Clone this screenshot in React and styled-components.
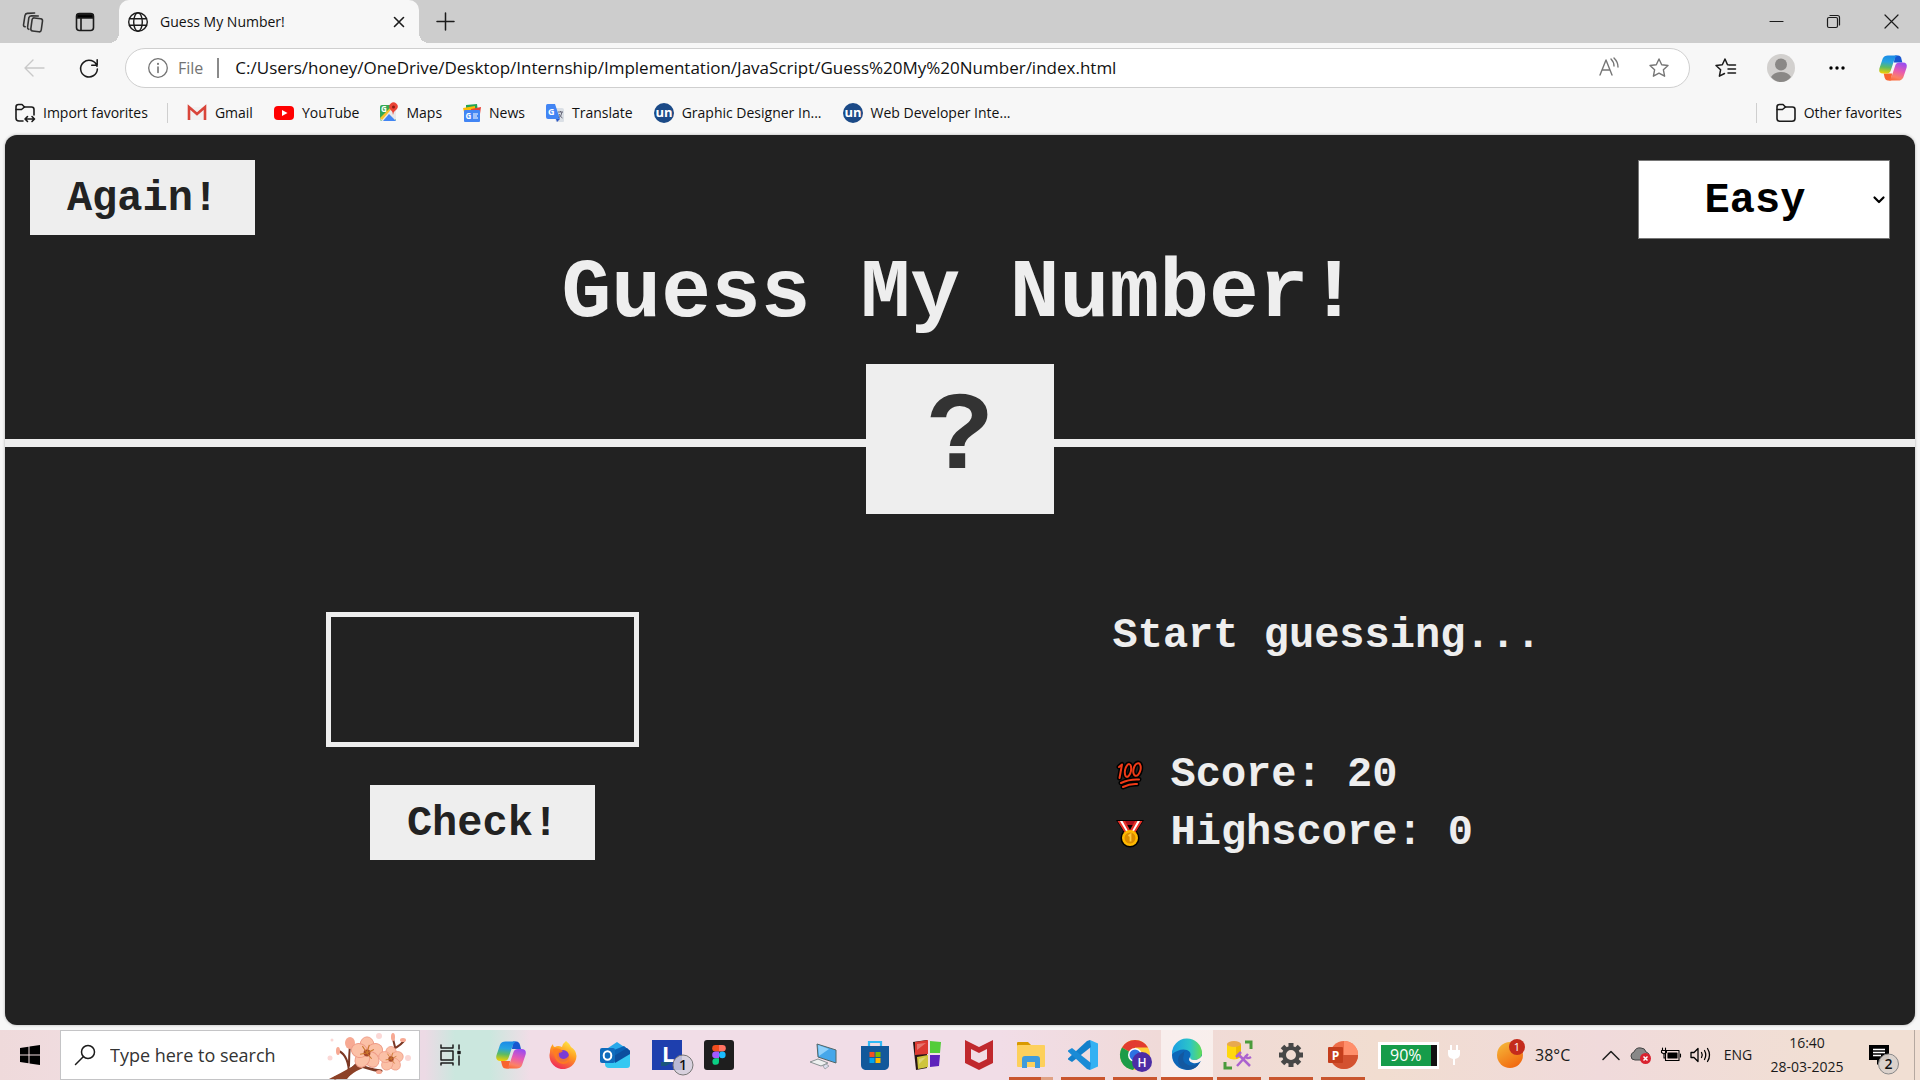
import React, { useState } from "react";
import styled, { createGlobalStyle } from "styled-components";

const Global = createGlobalStyle`
  * { box-sizing: border-box; }
  body { margin: 0; background: #f7f7f7; font-family: "Open Sans", "Noto Sans", sans-serif; color: #111; }
  button, input, select { font: inherit; color: inherit; margin: 0; padding: 0; border: 0; background: none; border-radius: 0; outline: none; }
  button, select { cursor: pointer; }
  a { color: inherit; text-decoration: none; }
  svg { display: block; flex: none; overflow: visible; }
`;

const ui = `"Open Sans", "Noto Sans", sans-serif`;
const mono = `"Liberation Mono", monospace`;

const Window = styled.div`
  display: flex;
  flex-direction: column;
  min-height: 100vh;
`;

/* ---------- browser chrome ---------- */
const TabStrip = styled.header`
  display: flex;
  height: 43px;
  background: #cdcdcd;
`;
const StripTools = styled.div`
  display: flex;
  align-items: center;
  width: 119px;
  gap: 32px;
  padding-left: 22px;
`;
const IconButton = styled.button`
  display: grid;
  place-items: center;
  width: ${(p) => p.$w || 20}px;
  height: ${(p) => p.$h || 20}px;
  flex: none;
`;
const Tab = styled.div`
  display: flex;
  align-items: center;
  gap: 12px;
  width: 300px;
  padding: 0 10px 0 9px;
  background: #f7f7f7;
  border-radius: 10px 10px 0 0;
  font: 14px/20px ${ui};
  position: relative;
  &::before, &::after {
    content: "";
    position: absolute;
    bottom: 0;
    width: 10px;
    height: 10px;
  }
  &::before { right: 100%; background: radial-gradient(circle at 0 0, transparent 10px, #f7f7f7 10px); }
  &::after { left: 100%; background: radial-gradient(circle at 100% 0, transparent 10px, #f7f7f7 10px); }
`;
const TabTitle = styled.span`
  flex: 1;
  white-space: nowrap;
`;
const NewTab = styled(IconButton)`
  align-self: center;
  margin-left: 16px;
`;
const WindowControls = styled.div`
  display: flex;
  align-items: center;
  margin-left: auto;
`;

const Toolbar = styled.div`
  display: flex;
  align-items: center;
  height: 50px;
  padding: 0 13px 0 20px;
`;
const NavButtons = styled.div`
  display: flex;
  gap: 34px;
  width: 105px;
  padding-left: 4px;
`;
const AddressBar = styled.form`
  display: flex;
  align-items: center;
  flex: 1;
  height: 40px;
  padding: 0 20px 0 22px;
  border: 1px solid #cfcfcf;
  border-radius: 20px;
  background: #fff;
  font: 16px/22px ${ui};
`;
const Scheme = styled.label`
  display: flex;
  align-items: center;
  gap: 10px;
  padding-right: 14px;
  border-right: 2px solid #8a8a8a;
  line-height: 20px;
  color: #737373;
`;
const Url = styled.input`
  flex: 1;
  min-width: 0;
  padding-left: 16px;
  font-size: 17px;
`;
const AddressTools = styled.div`
  display: flex;
  gap: 30px;
`;
const ToolbarEnd = styled.div`
  display: flex;
  align-items: center;
  gap: 28px;
  padding-left: 21px;
`;

const Favorites = styled.nav`
  display: flex;
  align-items: center;
  gap: 21px;
  height: 42px;
  padding: 0 18px 2px 15px;
  font: 14px/20px ${ui};
  white-space: nowrap;
`;
const Favorite = styled.a`
  display: flex;
  align-items: center;
  gap: 8px;
`;
const Divider = styled.span`
  width: 1px;
  height: 20px;
  margin: 0 -2px;
  background: #cfcfcf;
`;
const Spacer = styled.span`
  flex: 1;
`;

/* ---------- game page ---------- */
const Page = styled.div`
  flex: 1;
  display: flex;
  flex-direction: column;
  margin: 0 5px 5px;
  border-radius: 12px;
  background: #222;
  color: #eee;
  font: bold 42px/58px ${mono};
  box-shadow: 0 0 3px #aaa;
`;
const GameHeader = styled.div`
  position: relative;
  height: 35%;
  min-height: 312px;
  padding: 25px;
  border-bottom: 8px solid #eee;
`;
const GameTools = styled.div`
  display: flex;
  justify-content: space-between;
  align-items: flex-start;
  height: 79px;
`;
const GameButton = styled.button`
  height: 75px;
  padding: 2px 36px 0;
  min-width: 225px;
  background: #eee;
  color: #222;
`;
const LevelBox = styled.div`
  display: grid;
  align-items: center;
  svg { grid-area: 1 / 1; justify-self: end; margin-right: 5px; pointer-events: none; }
`;
const Level = styled.select`
  grid-area: 1 / 1;
  appearance: none;
  width: 252px;
  height: 79px;
  padding: 2px 18px 0 0;
  border: 1px solid #767676;
  background: #fff;
  color: #000;
  text-align: center;
  text-align-last: center;
`;
const Title = styled.h1`
  margin: 0;
  font: bold 83px/110px ${mono};
  text-align: center;
`;
const Secret = styled.div`
  position: absolute;
  left: 50%;
  bottom: -75px;
  width: 188px;
  height: 150px;
  margin-left: -94px;
  background: #eee;
  color: #333;
  font: bold 112px/150px ${mono};
  text-align: center;
`;
const Main = styled.main`
  flex: 1;
  display: flex;
  align-items: center;
  justify-content: space-around;
`;
const GuessForm = styled.form`
  display: flex;
  flex-direction: column;
  align-items: center;
  gap: 38px;
  width: 650px;
`;
const Guess = styled.input`
  width: 313px;
  height: 135px;
  border: 5px solid #eee;
  text-align: center;
`;
const Status = styled.section`
  width: 650px;
  padding-top: 8px;
`;
const Message = styled.p`
  margin: 0 0 92px;
  line-height: 36px;
`;
const Score = styled.p`
  display: flex;
  align-items: center;
  gap: 27px;
  margin: 0;
  padding-left: 3px;
`;

/* ---------- taskbar ---------- */
const Taskbar = styled.footer`
  display: flex;
  height: 50px;
  color: #1a1a1a;
  background: linear-gradient(90deg, #efdadb 0, #f1dde2 120px, #ecdae5 425px, #cbe7de 455px, #cbe7de 490px, #f1dde7 530px, #f1dde7 1000px, #f0dad8 1160px, #f1ddd0 1380px, #f0dadb 1600px, #f1dfd3 1830px, #f1dfd3 100%);
`;
const StartButton = styled(IconButton)`
  width: 60px;
  height: 50px;
`;
const SearchBox = styled.label`
  display: flex;
  align-items: center;
  gap: 15px;
  width: 360px;
  padding: 0 6px 0 14px;
  border: 1px solid #c4c4c6;
  background: #fff;
`;
const SearchInput = styled.input`
  flex: 1;
  min-width: 0;
  font: 18px/26px ${ui};
  &::placeholder { color: #333; opacity: 1; }
`;
const Dock = styled.div`
  display: flex;
  margin-left: 5px;
`;
const DockButton = styled.button`
  display: grid;
  place-items: center;
  width: 52px;
  height: 50px;
  background: ${(p) => (p.$active ? "rgba(255,255,255,.55)" : "none")};
  border-bottom: 3px solid transparent;
  border-image: ${(p) =>
    p.$active
      ? "linear-gradient(#c9562e, #c9562e) 1"
      : p.$stacked
      ? "linear-gradient(90deg, transparent 5px, #c9562e 5px, #c9562e 36px, #e0a184 36px, #e0a184 47px, transparent 47px) 1"
      : p.$open
      ? "linear-gradient(90deg, transparent 5px, #c9562e 5px, #c9562e 47px, transparent 47px) 1"
      : "none"};
  padding-top: 3px;
`;
const Tray = styled.div`
  display: flex;
  align-items: center;
  margin-left: auto;
  font: 15px/20px ${ui};
`;
const Battery = styled.div`
  display: flex;
  align-items: center;
  gap: 9px;
  margin-right: 37px;
`;
const Charge = styled.span`
  width: 61px;
  height: 27px;
  border: 3px solid #fff;
  border-right-width: 2px;
  background: linear-gradient(90deg, #169c4a 50px, #111 50px);
  color: #fff;
  font: 16px/21px ${ui};
  padding-left: 9px;
`;
const Weather = styled.button`
  display: flex;
  align-items: center;
  gap: 12px;
  width: 104px;
  font: 16px/22px ${ui};
`;
const TrayIcons = styled.div`
  display: flex;
  align-items: center;
  gap: 10px;
`;
const Lang = styled.button`
  width: 42px;
  margin-left: 6px;
  font: 14px/20px ${ui};
`;
const Clock = styled.button`
  width: 96px;
  font: 14px/24px ${ui};
  text-align: center;
  white-space: nowrap;
`;
const Notices = styled(IconButton)`
  width: 60px;
  height: 50px;
  padding-right: 12px;
  border-right: 1px solid #b5a8a0;
  margin-right: 5px;
`;

/* ---------- drawings ---------- */
const Line = ({ w = 20, h = w, vb = "0 0 20 20", sw = 1.4, c = "#1b1b1b", children }) => (
  <svg width={w} height={h} viewBox={vb} fill="none" stroke={c} strokeWidth={sw} strokeLinecap="round" strokeLinejoin="round" aria-hidden="true">{children}</svg>
);
const Art = ({ w = 30, h = w, vb = "0 0 30 30", children }) => (
  <svg width={w} height={h} viewBox={vb} aria-hidden="true">{children}</svg>
);

const Copilot = ({ size, id }) => (
  <Art w={size}>
    <defs>
      <linearGradient id={id + "a"} x1="0.4" y1="0" x2="0.3" y2="1"><stop offset="0" stopColor="#1b8be8" /><stop offset=".35" stopColor="#27a4e0" /><stop offset=".65" stopColor="#5dbb63" /><stop offset="1" stopColor="#f5d000" /></linearGradient>
      <linearGradient id={id + "b"} x1="0.6" y1="0" x2="0.3" y2="1"><stop offset="0" stopColor="#9a4df0" /><stop offset=".45" stopColor="#e85bb0" /><stop offset=".8" stopColor="#fb8267" /><stop offset="1" stopColor="#fb6a3c" /></linearGradient>
    </defs>
    <path d="M17 1.500H20.500Q23 1.500 24 5L25 9H16Z" fill="#1756d0" />
    <path d="M13 28.500H9.500Q7 28.500 6 25L5 21H14Z" fill="#f8632f" />
    <path d="M9.500 1.500H20Q17.500 2.500 16.500 6L12.500 18Q11.500 21 8 21H4.500Q-.8 21 .4 15.500L4 4.800Q5.500 1.500 9.500 1.500Z" fill={`url(#${id}a)`} />
    <path d="M20.500 28.500H10Q12.500 27.500 13.500 24L17.500 12Q18.500 9 22 9H25.500Q30.800 9 29.600 14.500L26 25.200Q24.500 28.500 20.500 28.500Z" fill={`url(#${id}b)`} />
  </Art>
);
const Un = () => (
  <Art w={20} vb="0 0 20 20">
    <circle cx="10" cy="10" r="10" fill="#1b4a87" />
    <text x="10" y="14" textAnchor="middle" fontFamily="Open Sans" fontWeight="bold" fontSize="13" fill="#fff">un</text>
  </Art>
);
const Folder = ({ arrow }) => (
  <Line sw={1.6}>
    <path d={arrow ? "M8 18H4Q1 18 1 15V4Q1 1.500 3.500 1.500H7L9.500 4H16.500Q19 4 19 6.500V12" : "M1 4Q1 1.500 3.500 1.500H7L9.500 4H16.500Q19 4 19 6.500V15.500Q19 18.300 16 18.300H4Q1 18.300 1 15.500Z"} />
    <path d="M1.200 6.500H6.500L9.500 4" />
    {arrow && <path d="M10.500 16H19M12.500 13.500L10 16L12.500 18.500M17 13.500L19.500 16L17 18.500" />}
  </Line>
);
const Star = "M10 1L12.700 6.800L19 7.500L14.400 11.800L15.600 18.200L10 15.100L4.400 18.200L5.600 11.800L1 7.500L7.300 6.800Z";

const favorites = [
  ["Gmail", <Art w={20} vb="0 0 20 20"><path d="M2 4V17H18V4" fill="#f1f1f1" /><path d="M2 17V4L10 11L18 4V17" fill="none" stroke="#d9453a" strokeWidth="2.600" /></Art>],
  ["YouTube", <Art w={20} vb="0 0 20 20"><rect y="3" width="20" height="14" rx="4" fill="#f00" /><path d="M8 7V13L13.500 10Z" fill="#fff" /></Art>],
  ["Maps", <Art w={18} h={20} vb="0 0 18 20"><rect y="2" width="16" height="16" rx="2" fill="#34a853" /><path d="M0 16L14 2L16 4V16L14 18H2Z" fill="#e8e8e8" /><path d="M3 18L9 11L16 18Z" fill="#4285f4" /><path d="M0 15L13 2H15L2 17Z" fill="#fbc02d" /><text x="1" y="9" fontSize="8" fontWeight="bold" fontFamily="Open Sans" fill="#fff">G</text><path d="M13 12Q12.500 8 10 6A4.200 4.200 0 1 1 17 6Q13.800 8 13 12Z" fill="#ea4335" /><circle cx="13.500" cy="4" r="1.500" fill="#8c1c13" /></Art>],
  ["News", <Art w={18} h={20} vb="0 0 18 20"><path d="M3 2L14 1L15 9H3Z" fill="#23a455" /><path d="M0 5L12 3V9H1Z" fill="#fbbc04" /><path d="M8 6L18 4L17 11H8Z" fill="#ea4335" /><rect x="1" y="7" width="16" height="12" rx="1" fill="#4285f4" /><text x="2.500" y="16" fontSize="8" fontWeight="bold" fontFamily="Open Sans" fill="#fff">G</text><path d="M10 11H15M10 13H14M10 15H15" stroke="#fff" strokeWidth="1.200" /></Art>],
  ["Translate", <Art w={18} h={20} vb="0 0 18 20"><path d="M6 5H16Q18 5 18 7V18Q18 19 17 19H10Z" fill="#dadfe5" /><path d="M1.500 1H9L14 16H2Q0 16 0 14V2.500Q0 1 1.500 1Z" fill="#4285f4" /><path d="M10 16H14L11 19Z" fill="#2a56c6" /><text x="2" y="12" fontSize="9" fontWeight="bold" fontFamily="Open Sans" fill="#fff">G</text><path d="M12 9H17M14.500 8V9M16 9Q15.500 13 12.500 15M13 11Q14.500 14 16.500 15" stroke="#667" fill="none" /></Art>],
  ["Graphic Designer In...", <Un />],
  ["Web Developer Inte...", <Un />],
];

const Blossom = ({ x, y, s }) => (
  <g transform={`translate(${x} ${y}) scale(${s})`}>
    {[0, 72, 144, 216, 288].map((r) => <ellipse key={r} cx="0" cy="-7" rx="6" ry="7" transform={`rotate(${r})`} fill="#fbc0a6" stroke="#ee9a86" strokeWidth=".8" />)}
    <circle r="3" fill="#a8452b" />
    <path d="M0 0L-4-6M0 0L2-7M0 0L6-3M0 0L-6 1M0 0L4 5" stroke="#c9772c" strokeWidth=".9" />
  </g>
);

const dock = [
  ["Copilot", <Copilot size={30} id="dock" />],
  ["Firefox", <Art w={28} vb="0 0 28 28"><defs><linearGradient id="fx" x1=".8" y1="0" x2=".3" y2="1"><stop offset="0" stopColor="#fff04a" /><stop offset=".45" stopColor="#ff9a1f" /><stop offset="1" stopColor="#f0265a" /></linearGradient></defs><path d="M17 0Q21 3 22 6Q27 9 27.500 15A13.500 13.500 0 1 1 1 11Q1 6 4 3Q4 6 6 6Q9 4 13 6Q14 2 17 0Z" fill="url(#fx)" /><circle cx="14" cy="15" r="6" fill="#7b3bd6" /><path d="M4 8Q9 6 14 10Q12 12 10 12Q9 17 14 18Q18 18 20 14Q22 23 14 23Q5 22 4 8Z" fill="#ff7c1f" opacity=".85" /></Art>],
  ["Outlook", <Art w={30}><path d="M5 10L17 2L30 11V16L5 22Z" fill="#28a8ea" /><path d="M9 12L24 6L30 11V14L14 22Z" fill="#0a62b5" /><path d="M5 23V18L30 14V25Q30 28 27 28H9Q5 28 5 24Z" fill="#35c8f2" /><path d="M14 16L27 8L30 11V14L15 23Z" fill="#0c4f9e" /><rect x="0" y="8" width="15" height="15" rx="2" fill="#0f6cbd" /><ellipse cx="7.500" cy="15.500" rx="3.800" ry="4.300" fill="none" stroke="#fff" strokeWidth="2" /></Art>],
  ["Lively", <Art w={30}><rect width="30" height="30" fill="#1e3fae" /><path d="M9 22L20 22L14 26H9Z" fill="#173" opacity=".4" /><text x="10" y="22" fontFamily="Open Sans" fontWeight="bold" fontSize="22" fill="#fff">L</text><circle cx="31" cy="25" r="10" fill="#d3cfdc" fillOpacity=".85" stroke="#777" /><text x="31" y="30" textAnchor="middle" fontFamily="Open Sans" fontSize="14" fontWeight="600" fill="#111">1</text></Art>],
  ["Figma", <Art w={30}><rect width="30" height="30" rx="3" fill="#1e1e1e" /><path d="M15 5H11.500A3.300 3.300 0 0 0 11.500 11.600H15Z" fill="#f24e1e" /><path d="M15 5H18.500A3.300 3.300 0 0 1 18.500 11.600H15Z" fill="#ff7262" /><path d="M15 11.600H11.500A3.300 3.300 0 0 0 11.500 18.200H15Z" fill="#a259ff" /><circle cx="18.300" cy="14.900" r="3.300" fill="#1abcfe" /><path d="M15 18.200H11.500A3.300 3.300 0 1 0 15 21.500Z" fill="#0acf83" /></Art>],
  null,
  ["This PC", <Art w={28} vb="0 0 28 28"><path d="M8 3L27 9V22L9 16Z" fill="#46a7ea" stroke="#566" /><path d="M9 4L20 8L10 15Z" fill="#8fd0fa" /><path d="M1 21L9 18L19 22L12 25Z" fill="#eef0f0" stroke="#8a9294" /><path d="M14 25L17 23L20 25L16 28Z" fill="#dde" stroke="#8a9294" strokeWidth=".7" /></Art>],
  ["Microsoft Store", <Art w={30}><path d="M9 7V2H21V7" fill="none" stroke="#31b8f5" strokeWidth="2.200" /><path d="M1 6H29V25Q29 29 25 30H5Q1 29 1 25Z" fill="#12589b" /><path d="M9.500 12H14.500V17H9.500Z" fill="#f25022" /><path d="M15.500 12H20.500V17H15.500Z" fill="#7fba00" /><path d="M9.500 18H14.500V23H9.500Z" fill="#00a4ef" /><path d="M15.500 18H20.500V23H15.500Z" fill="#ffb900" /></Art>],
  ["Blocks", <Art w={30}><path d="M1 2L15 0V28L4 30Z" fill="#271515" /><path d="M3 2L16 0V14L3 15Z" fill="#dc3a32" /><path d="M18 1L29 2L28 13H18Z" fill="#54cc3a" /><path d="M5 17L16 15V27L6 29Z" fill="#cfc53c" /><path d="M18 15H28L27 26L18 27Z" fill="#5e22bb" /><path d="M5 4L14 3L5 10ZM7 19L14 17L7 24Z" fill="#fff" opacity=".3" /></Art>],
  ["McAfee", <Art w={28} h={30} vb="0 0 28 30"><path d="M0 0L14 7L28 0V23L14 30L0 23Z" fill="#c0282d" /><path d="M6 9L14 13L22 9V19L14 23L6 19Z" fill="#f1dde5" /></Art>],
  ["File Explorer", <Art w={28} h={26} vb="0 0 28 26"><path d="M0 1Q0 0 1 0H11L14 3V7H0Z" fill="#d99a00" /><rect y="3" width="28" height="22" rx="1" fill="#fdd05c" /><path d="M5 26V17Q5 14 8 14H20Q23 14 23 17V26H18V20H10V26Z" fill="#3f9bdc" /></Art>, { $stacked: true }],
  ["Visual Studio Code", <Art w={30}><path d="M22 0L30 3.500V26.500L22 30Z" fill="#33b1f3" /><path d="M22 0L23 7L4 22L0 19.500V18.500L19 1Z" fill="#1380cb" /><path d="M22 30L23 23L4 8L0 10.500V11.500L19 29Z" fill="#1a8bd6" /></Art>, { $open: true }],
  ["Chrome", <Art w={30}><circle cx="15" cy="15" r="15" fill="#ffd03b" /><path d="M15 15L2 7.500A15 15 0 0 1 28 7.500H15Z" fill="#e23c30" /><path d="M15 15L2 7.500A15 15 0 0 0 13 30L21 19Z" fill="#1c9c49" /><circle cx="15" cy="15" r="7" fill="#fff" /><circle cx="15" cy="15" r="5.500" fill="#2d72e2" /><circle cx="22" cy="22" r="10" fill="#4c2da5" /><text x="22" y="26.500" textAnchor="middle" fontFamily="Open Sans" fontSize="12" fontWeight="600" fill="#fff">H</text></Art>, { $open: true }],
  ["Edge", <Art w={30}><defs><linearGradient id="ed" x1="0" y1=".4" x2="1" y2=".4"><stop offset="0" stopColor="#1b9ee2" /><stop offset=".6" stopColor="#2cc5c8" /><stop offset="1" stopColor="#62de52" /></linearGradient></defs><circle cx="15" cy="15" r="15" fill="#0c66b8" /><path d="M0 14A15 15 0 0 1 30 13Q30 20 22 20Q17 20 18 17Q20 12 15 10Q8 8 0 14Z" fill="url(#ed)" /><path d="M12 14Q9 22 16 25Q22 27 28 22Q24 30 16 30Q6 28 6 20Q6 14 15 10Q11 12 12 14Z" fill="#1358a0" /><path d="M18 17Q15 21 21 23Q25 24 29 21L31 19V14Q28 20 22 20Q18 20 18 17Z" fill="#fbf1ee" /></Art>, { $active: true }],
  ["Data Tools", <Art w={30}><path d="M3 4V17Q10 22 17 17V4Z" fill="#ffd80d" /><path d="M12 4H17V17L12 19Z" fill="#eebd00" /><ellipse cx="10" cy="4" rx="7" ry="3" fill="#e8a94f" /><path d="M21 2H27V9M1 22V28H8" fill="none" stroke="#4a9b3c" strokeWidth="3" /><path d="M13 26L24 14M14 14L26 26M12 17L17 12M22 15Q22 20 27 17" fill="none" stroke="#ab62cf" strokeWidth="2.500" /></Art>, { $open: true }],
  ["Settings", <Art w={24} vb="0 0 24 24"><circle cx="12" cy="12" r="7" fill="none" stroke="#474747" strokeWidth="4" />{[0, 45, 90, 135, 180, 225, 270, 315].map((r) => <rect key={r} x="9.500" y="0" width="5" height="5" fill="#474747" transform={`rotate(${r} 12 12)`} />)}</Art>, { $open: true }],
  ["PowerPoint", <Art w={30}><circle cx="16" cy="15" r="14" fill="#ed6c47" /><path d="M16 1A14 14 0 0 1 30 15H16Z" fill="#ff8f6b" /><path d="M2 15H30A14 14 0 0 1 2 15Z" fill="#d35230" /><rect x="0" y="7" width="15" height="16" rx="1" fill="#c43e1c" /><text x="7.500" y="19.500" textAnchor="middle" fontFamily="Open Sans" fontWeight="bold" fontSize="12" fill="#fff">P</text></Art>, { $open: true }],
];

export default function App() {
  const [url, setUrl] = useState("C:/Users/honey/OneDrive/Desktop/Internship/Implementation/JavaScript/Guess%20My%20Number/index.html");
  const [guess, setGuess] = useState("");
  const stay = (e) => e.preventDefault();
  return (
    <Window>
      <Global />
      <TabStrip>
        <StripTools>
          <IconButton aria-label="Workspaces" $w={21}>
            <Line w={21} sw={1.5} c="#333"><rect x="9" y="6" width="10" height="12.500" rx="2" transform="rotate(8 14 12)" /><path d="M6.500 16.500Q5 16 5.300 14.500L6.500 5.500Q7 3.500 9 3.500L15.500 3.800M3 14Q1 13.500 1.500 12L2.800 3.500Q3.200 1.500 5 1.300L12 1" /></Line>
          </IconButton>
          <IconButton aria-label="Tab actions">
            <Line sw={1.6}><rect x="1.500" y="1.500" width="17" height="17" rx="3" /><path d="M2 2.500H18V6H2Z" fill="#000" /><path d="M6 6V18" /></Line>
          </IconButton>
        </StripTools>
        <Tab>
          <Line w={20} sw={1.4}><circle cx="10" cy="10" r="9.300" /><ellipse cx="10" cy="10" rx="4.300" ry="9.300" /><path d="M1.500 6.800H18.500M1.500 13.200H18.500" /></Line>
          <TabTitle>Guess My Number!</TabTitle>
          <IconButton aria-label="Close tab"><Line w={10} vb="0 0 10 10" sw={1.6}><path d="M.5 .5L9.500 9.500M9.500 .5L.5 9.500" /></Line></IconButton>
        </Tab>
        <NewTab aria-label="New tab"><Line w={17} vb="0 0 17 17" sw={1.5}><path d="M8.500 0V17M0 8.500H17" /></Line></NewTab>
        <WindowControls>
          <IconButton $w={57} aria-label="Minimize"><Line w={13} vb="0 0 13 13" sw={1.200}><path d="M0 6.500H13" /></Line></IconButton>
          <IconButton $w={57} aria-label="Restore"><Line w={13} vb="0 0 13 13" sw={1.200}><rect x=".5" y="2.500" width="10" height="10" rx="1.500" /><path d="M3 .5H10.500Q12.500 .5 12.500 2.500V10" /></Line></IconButton>
          <IconButton $w={58} aria-label="Close"><Line w={13} vb="0 0 13 13" sw={1.200}><path d="M0 0L13 13M13 0L0 13" /></Line></IconButton>
        </WindowControls>
      </TabStrip>

      <Toolbar>
        <NavButtons>
          <IconButton aria-label="Back"><Line c="#c9c9c9"><path d="M20 10H1M9 2L1 10L9 18" /></Line></IconButton>
          <IconButton aria-label="Refresh" $w={22}><Line w={20} vb="0 0 22 22" sw={1.700}><path d="M19.800 9A9.200 9.200 0 1 0 20.200 12M20 2V8H14" /></Line></IconButton>
        </NavButtons>
        <AddressBar onSubmit={stay}>
          <Scheme htmlFor="url"><Line w={20} c="#737373" sw={1.300}><circle cx="10" cy="10" r="9.300" /><path d="M10 9V14.500" strokeWidth="1.600" /><path d="M10 5.800V6" strokeWidth="2" /></Line>File</Scheme>
          <Url id="url" value={url} onChange={(e) => setUrl(e.target.value)} />
          <AddressTools>
            <IconButton type="button" aria-label="Read aloud"><Line c="#767676"><path d="M1 17L7 2L13 17M3 12H11M12 1Q15 4 15 8M15 0Q19 4 19 9" /></Line></IconButton>
            <IconButton type="button" aria-label="Add favorite"><Line c="#767676"><path d={Star} /></Line></IconButton>
          </AddressTools>
        </AddressBar>
        <ToolbarEnd>
          <IconButton aria-label="Favorites" $w={28}><Line w={20} sw={1.500}><path d="M13 6.800H12.500L10 1L7.300 6.800L1 7.500L5.600 11.800L4.400 18.200L9.500 15.500M14 7H20.500M13 11H20.500M13 15H20.500" /></Line></IconButton>
          <IconButton aria-label="Profile" $w={28} $h={28}><Art w={28} vb="0 0 28 28"><circle cx="14" cy="14" r="14" fill="#d2d0ce" /><circle cx="14" cy="10.500" r="6" fill="#8a8886" /><path d="M4 23Q7 18 14 18Q21 18 24 23Q20 28 14 28Q8 28 4 23Z" fill="#8a8886" /></Art></IconButton>
          <IconButton aria-label="More" $w={28}><Art w={16} h={4} vb="0 0 16 4"><circle cx="2" cy="2" r="1.700" /><circle cx="8" cy="2" r="1.700" /><circle cx="14" cy="2" r="1.700" /></Art></IconButton>
          <IconButton aria-label="Copilot" $w={28} $h={28}><Copilot size={28} id="bar" /></IconButton>
        </ToolbarEnd>
      </Toolbar>

      <Favorites>
        <Favorite href="#import"><Folder arrow />Import favorites</Favorite>
        <Divider />
        {favorites.map(([name, icon]) => <Favorite key={name} href={"#" + name}>{icon}{name}</Favorite>)}
        <Spacer />
        <Divider />
        <Favorite href="#other"><Folder />Other favorites</Favorite>
      </Favorites>

      <Page>
        <GameHeader>
          <GameTools>
            <GameButton>Again!</GameButton>
            <LevelBox>
              <Level aria-label="Difficulty" defaultValue="Easy"><option>Easy</option><option>Medium</option><option>Hard</option></Level>
              <Line w={12} h={8} vb="0 0 12 8" sw={2.200} c="#000"><path d="M1.500 1.500L6 6L10.500 1.500" /></Line>
            </LevelBox>
          </GameTools>
          <Title>Guess My Number!</Title>
          <Secret>?</Secret>
        </GameHeader>
        <Main>
          <GuessForm onSubmit={stay}>
            <Guess aria-label="Your guess" inputMode="numeric" value={guess} onChange={(e) => setGuess(e.target.value)} />
            <GameButton>Check!</GameButton>
          </GuessForm>
          <Status>
            <Message>Start guessing...</Message>
            <Score>
              <Art w={28} vb="0 0 28 28">
                <g fill="none" strokeLinecap="round" strokeLinejoin="round">
                  {[["#000", 5], ["#f03a17", 2]].map(([c, w]) => (
                    <g key={c} stroke={c} strokeWidth={w}>
                      <path d="M3 6L6 3.500L3.500 17" /><ellipse cx="12" cy="9.500" rx="3" ry="6.500" transform="rotate(12 12 9.500)" /><ellipse cx="21" cy="8.500" rx="3.500" ry="6.500" transform="rotate(14 21 8.500)" /><path d="M5 22Q13 18 23 18.500M7 26Q14 22.500 21 23" />
                    </g>
                  ))}
                </g>
              </Art>
              <span>Score: <span>20</span></span>
            </Score>
            <Score>
              <Art w={28} vb="0 0 28 28">
                <path d="M0 1H28L19 15H9Z" fill="#000" /><circle cx="14" cy="19" r="9.500" fill="#000" />
                <path d="M8 2H20L17 6H11Z" fill="#a80f1c" /><path d="M1.500 2H9L14 11L12 14H9Z" fill="#e8322a" /><path d="M26.500 2H19L14 11L16 14H19Z" fill="#e8322a" /><path d="M4 2H6.500L12 12L10.500 13ZM24 2H21.500L16 12L17.500 13Z" fill="#fff" />
                <circle cx="14" cy="19" r="8" fill="#ffb900" /><circle cx="14" cy="19" r="5.500" fill="#dc8d00" /><path d="M12.500 17L14.500 15.500V22.500" fill="none" stroke="#ffc83d" strokeWidth="1.800" />
              </Art>
              <span>Highscore: <span>0</span></span>
            </Score>
          </Status>
        </Main>
      </Page>

      <Taskbar>
        <StartButton aria-label="Start"><Art w={20} vb="0 0 20 20"><path d="M0 3L8.500 1.800V9.500H0ZM9.500 1.600L20 0V9.500H9.500ZM0 10.500H8.500V18.200L0 17ZM9.500 10.500H20V20L9.500 18.400Z" /></Art></StartButton>
        <SearchBox>
          <Line w={20} sw={1.500}><circle cx="13" cy="7" r="6.500" /><path d="M8.500 11.500L.5 19.500" /></Line>
          <SearchInput placeholder="Type here to search" aria-label="Search" />
          <Art w={84} h={48} vb="0 0 84 48">
            <g fill="none" stroke="#7b3824" strokeLinecap="round">
              <path d="M6 47Q20 42 28 33Q38 38 52 40" strokeWidth="3" /><path d="M20 44Q20 25 10 20M20 35Q20 25 21 13M28 33L40 25M58 20Q68 18 75 10M66 16L64 8" strokeWidth="2" />
            </g>
            <path d="M0 48Q12 42 26 34L34 37Q22 42 18 48Z" fill="#8c4127" />
            <g fill="#f7a993"><ellipse cx="21" cy="12" rx="5" ry="6" /><ellipse cx="9" cy="20" rx="2" ry="4" /><ellipse cx="64" cy="6" rx="2" ry="4" /><ellipse cx="74" cy="9" rx="3" ry="2" /><ellipse cx="50" cy="41" rx="3" ry="2" /></g>
            <g fill="#fbd8d6"><circle cx="50" cy="5" r="3" /><circle cx="79" cy="27" r="3" /><circle cx="1" cy="27" r="2.500" /><circle cx="3" cy="9" r="1.500" /></g>
            <Blossom x={38} y={22} s={1.150} /><Blossom x={62} y={28} s={0.900} />
          </Art>
        </SearchBox>
        <StartButton aria-label="Task view"><Line w={20} sw={1.500}><rect x="1" y="6" width="12" height="9" /><path d="M1 0V3H13V0M1 20V18H13V20M19 0V4M19 11V20" /><rect x="18" y="6.500" width="2" height="2" fill="#000" /></Line></StartButton>
        <Dock>
          {dock.map((d, i) => d ? <DockButton key={i} aria-label={d[0]} {...(d[2] || {})}>{d[1]}</DockButton> : <DockButton key={i} as="span" />)}
        </Dock>
        <Tray>
          <Battery>
            <Charge>90%</Charge>
            <Art w={12} h={20} vb="0 0 12 20"><path d="M2 0H4V5H8V0H10V5H12V9Q12 13 7 14V20H5V14Q0 13 0 9V5H2Z" fill="#fff" /></Art>
          </Battery>
          <Weather>
            <Art w={26} vb="0 0 26 26"><defs><linearGradient id="sun" x1="0" y1="0" x2=".6" y2="1"><stop offset="0" stopColor="#f5bd3c" /><stop offset="1" stopColor="#f26a10" /></linearGradient></defs><circle cx="13" cy="13" r="13" fill="url(#sun)" /><circle cx="20" cy="5" r="8" fill="#c42b1c" /><text x="20" y="9" textAnchor="middle" fontFamily="Open Sans" fontSize="11" fill="#fff">1</text></Art>
            38°C
          </Weather>
          <TrayIcons>
            <IconButton aria-label="Show hidden icons"><Line w={16} h={9} vb="0 0 16 9" sw={1.500}><path d="M0 8.500L8 .5L16 8.500" /></Line></IconButton>
            <IconButton aria-label="OneDrive"><Art w={20} vb="0 0 20 20"><path d="M4 15Q0 15 0 11Q0 8 3 7Q5 2 10 3Q14 3 15 7Q19 8 18 13L16 15Z" fill="#888" stroke="#444" /><circle cx="14.500" cy="13.500" r="5.500" fill="#d92330" /><path d="M12.500 11.500L16.500 15.500M16.500 11.500L12.500 15.500" stroke="#fff" strokeWidth="1.500" /></Art></IconButton>
            <IconButton aria-label="Power"><Line w={20} sw={1.100} c="#000"><rect x="4.500" y="5.500" width="13.500" height="10" /><path d="M7 8H16V13H7Z" fill="#000" /><path d="M19.500 9V12M1.500 3V5M4.500 3V5M.5 5.500H5.500V7.500L3 9L.5 7.500ZM3 9V13H4.500" /></Line></IconButton>
            <IconButton aria-label="Volume"><Line w={20} sw={1.300} c="#000"><path d="M0 7.500H3L7 3.500V16.500L3 12.500H0ZM10.500 7.500Q12 10 10.500 12.500M13.500 5.500Q16 10 13.500 14.500M16.500 3.500Q20.500 10 16.500 16.500" /></Line></IconButton>
          </TrayIcons>
          <Lang>ENG</Lang>
          <Clock>16:40<br />28-03-2025</Clock>
          <Notices aria-label="Notifications"><Art w={20} vb="0 0 20 20"><path d="M0 0H20V15H13L8 20V15H0Z" fill="#000" /><path d="M4 4.500H16M4 7.500H16M4 10.500H12" stroke="#fff" strokeWidth="1.300" /><circle cx="19.500" cy="19" r="10" fill="#d9d1cb" fillOpacity=".94" stroke="#888" /><text x="19.500" y="24" textAnchor="middle" fontFamily="Open Sans" fontWeight="600" fontSize="14" fill="#111">2</text></Art></Notices>
        </Tray>
      </Taskbar>
    </Window>
  );
}
